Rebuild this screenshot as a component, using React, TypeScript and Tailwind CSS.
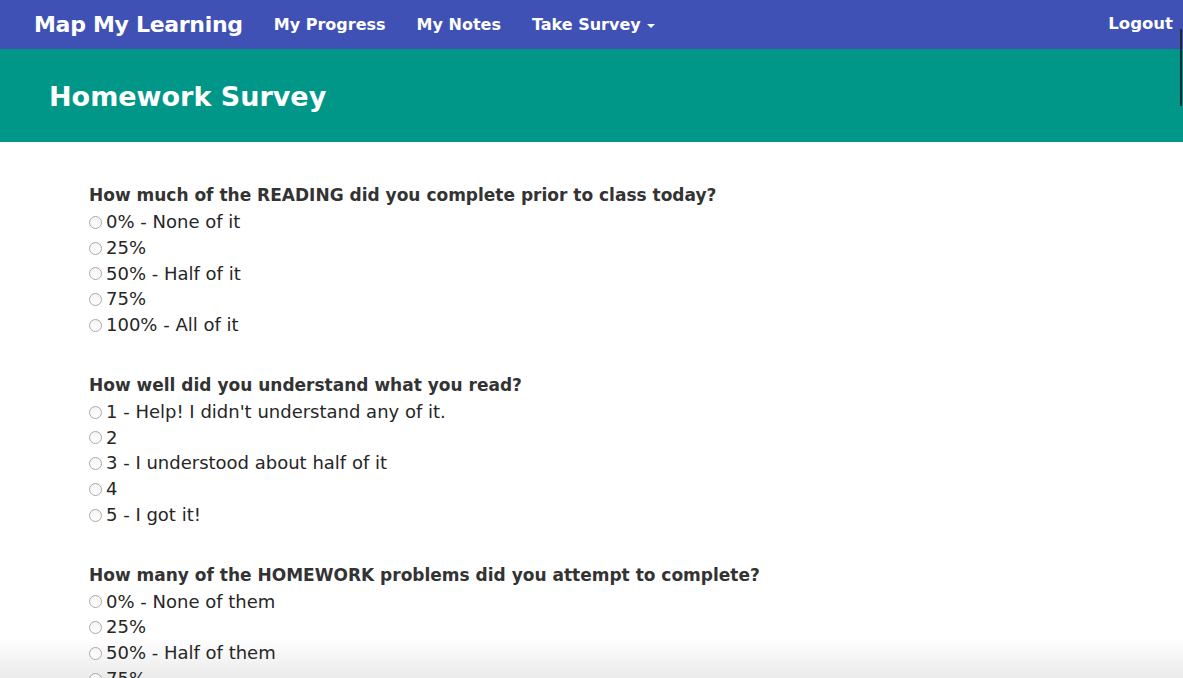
import React from "react";

const questions = [
  {
    q: "How much of the READING did you complete prior to class today?",
    opts: ["0% - None of it", "25%", "50% - Half of it", "75%", "100% - All of it"],
  },
  {
    q: "How well did you understand what you read?",
    opts: ["1 - Help! I didn't understand any of it.", "2", "3 - I understood about half of it", "4", "5 - I got it!"],
  },
  {
    q: "How many of the HOMEWORK problems did you attempt to complete?",
    opts: ["0% - None of them", "25%", "50% - Half of them", "75%", "100% - All of them"],
  },
];

export default function App() {
  return (
    <div className="relative h-[678px] w-[1183px] overflow-hidden bg-white font-['DejaVu_Sans',sans-serif] text-[#333]">
      <div className="pointer-events-none absolute bottom-0 left-0 h-[40px] w-full bg-gradient-to-b from-white to-[#ebebeb]" />
      <nav className="relative flex h-[49px] items-center bg-[#3f51b5] text-white">
        <div className="ml-[34px] text-[22px] font-semibold tracking-[-0.3px]">Map My Learning</div>
        <div className="ml-[31px] flex items-center gap-[31px] text-[16px] font-semibold">
          <span>My Progress</span>
          <span>My Notes</span>
          <span className="flex items-center">
            Take Survey
            <span className="ml-[6px] mt-[2px] h-0 w-0 border-x-[4px] border-t-[4px] border-x-transparent border-t-white" />
          </span>
        </div>
        <div className="ml-auto mr-[10px] text-[16.5px] font-semibold">Logout</div>
      </nav>
      <header className="relative flex h-[93px] items-center bg-[#009688] pl-[49px] pt-[4px] text-[27px] font-semibold text-white">
        Homework Survey
      </header>
      <main className="relative pl-[89px] pt-[40px]">
        {questions.map((b, i) => (
          <div key={i} className="mb-[35px]">
            <div className="h-[26px] text-[17px] font-bold leading-[26px]">{b.q}</div>
            {b.opts.map((o) => (
              <label key={o} className="flex h-[25.75px] items-center text-[18px] leading-[25.75px] text-[#262626]">
                <span className="mr-[4px] mt-[3px] h-[13px] w-[13px] shrink-0 rounded-full border border-[#a9a9a9] bg-gradient-to-b from-[#f4f4f4] to-white" />
                <span className="mt-[2px]">{o}</span>
              </label>
            ))}
          </div>
        ))}
      </main>
      <div className="absolute right-[1px] top-[29px] h-[77px] w-[2px] bg-[#1f2a33]" />
    </div>
  );
}
